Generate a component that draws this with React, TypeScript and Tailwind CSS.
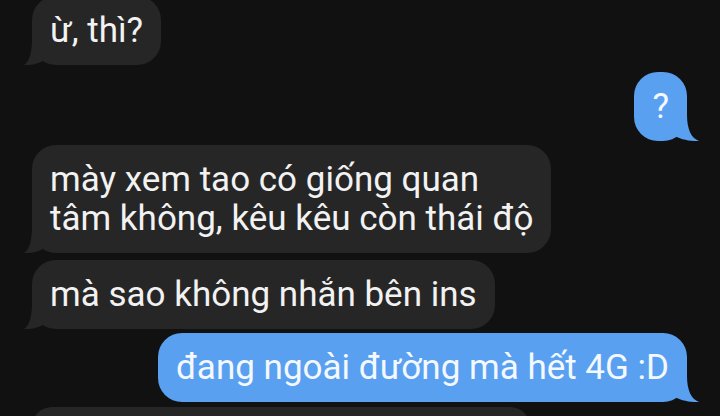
import React from "react";

type Msg = {
  id: number;
  side: "in" | "out";
  lines: string[];
  gap: string;
};

const messages: Msg[] = [
  { id: 1, side: "in", lines: ["ừ, thì?"], gap: "mt-[-4px]" },
  { id: 2, side: "out", lines: ["?"], gap: "mt-[7px]" },
  {
    id: 3,
    side: "in",
    lines: ["mày xem tao có giống quan", "tâm không, kêu kêu còn thái độ"],
    gap: "mt-[4px]",
  },
  { id: 4, side: "in", lines: ["mà sao không nhắn bên ins"], gap: "mt-[7px]" },
  { id: 5, side: "out", lines: ["đang ngoài đường mà hết 4G :D"], gap: "mt-[4px]" },
];

// little tail under the bubble corner
function Tail({ side }: { side: "in" | "out" }) {
  if (side === "in") {
    return (
      <svg
        className="absolute bottom-0 left-[-10px] overflow-visible"
        width="40"
        height="28"
        viewBox="0 0 40 28"
      >
        <path d="M10 2 C10 16 7 25 2 28 C8 28.5 17 27 22 23 Z" fill="#262626" />
      </svg>
    );
  }
  return (
    <svg
      className="absolute bottom-0 right-[-14px] overflow-visible"
      width="40"
      height="28"
      viewBox="0 0 40 28"
    >
      <path d="M26 2 C26 16 30 25 38 28 C31 28.5 21 27 14 23 Z" fill="#5aa0f0" />
    </svg>
  );
}

function Bubble({ msg }: { msg: Msg }) {
  const isOut = msg.side === "out";
  return (
    <div className={`flex ${isOut ? "justify-end pr-[33px]" : "justify-start pl-[32px]"} ${msg.gap}`}>
      <div
        className={`relative rounded-[24px] px-[18px] py-[15px] text-[35px] leading-[39px] ${
          isOut ? "bg-[#5aa0f0] text-[#f4f8ff] min-w-[47px] text-center" : "bg-[#262626] text-[#f2f2f2]"
        }`}
      >
        {msg.lines.map((line, i) => (
          <div key={i} className="whitespace-nowrap">
            {line}
          </div>
        ))}
        <Tail side={msg.side} />
      </div>
    </div>
  );
}

export default function App() {
  return (
    <div
      className="w-[720px] h-[416px] overflow-hidden bg-[#111111] flex flex-col"
      style={{ fontFamily: "Roboto, 'Noto Sans', sans-serif" }}
    >
      {messages.map((m) => (
        <Bubble key={m.id} msg={m} />
      ))}
      {/* next incoming bubble, only its top edge is in view */}
      <div className="ml-[32px] mt-[5px] h-[40px] w-[498px] shrink-0 rounded-[24px] bg-[#262626]" />
    </div>
  );
}
